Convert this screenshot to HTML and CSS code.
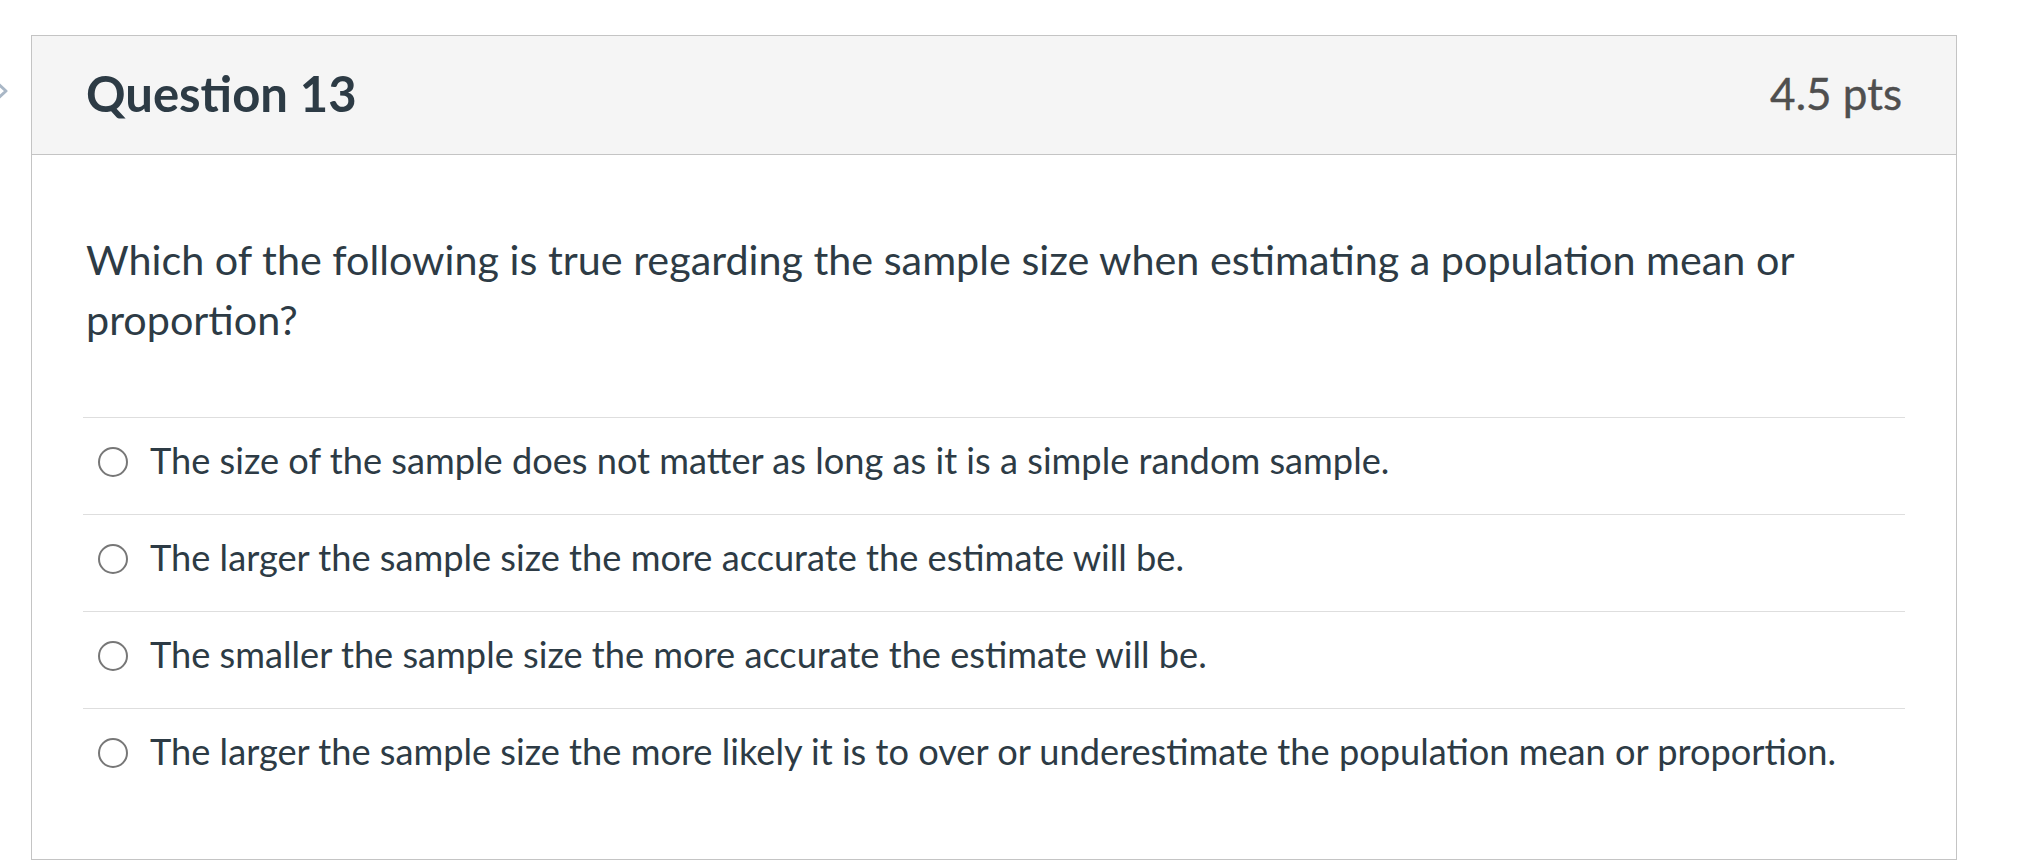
FILE: index.html
```html
<!DOCTYPE html>
<html lang="en">
<head>
<meta charset="utf-8">
<title>Question 13</title>
<link rel="stylesheet" href="styles.css">
</head>
<body>
<div class="page">
  <svg class="side-chevron" width="20" height="24" viewBox="0 0 20 24" aria-hidden="true">
    <path d="M4 3 L14 12 L4 21" fill="none" stroke="#a9b7c6" stroke-width="3" stroke-linecap="round" stroke-linejoin="round"/>
  </svg>
  <div class="question">
    <div class="question-header">
      <h2 class="question-name">Question 13</h2>
      <span class="question-points">4.5 pts</span>
    </div>
    <div class="question-body">
      <p class="question-text">Which of the following is true regarding the sample size when estimating a population mean or proportion?</p>
      <div class="answers">
        <label class="answer"><span class="radio"></span><span class="answer-text">The size of the sample does not matter as long as it is a simple random sample.</span></label>
        <label class="answer"><span class="radio"></span><span class="answer-text">The larger the sample size the more accurate the estimate will be.</span></label>
        <label class="answer"><span class="radio"></span><span class="answer-text">The smaller the sample size the more accurate the estimate will be.</span></label>
        <label class="answer"><span class="radio"></span><span class="answer-text">The larger the sample size the more likely it is to over or underestimate the population mean or proportion.</span></label>
      </div>
    </div>
  </div>
</div>
</body>
</html>
```

FILE: styles.css
```css
html, body {
  margin: 0;
  padding: 0;
  background: #ffffff;
}

body {
  font-family: Lato, "Noto Sans", "Liberation Sans", sans-serif;
  color: #2d3b45;
  font-feature-settings: "liga" 1;
}

.page {
  position: relative;
  padding: 35px 0 0 31px;
}

.side-chevron {
  position: absolute;
  left: -8px;
  top: 79px;
}

.question {
  width: 1926px;
  height: 825px;
  box-sizing: border-box;
  border: 1px solid #c4c4c4;
  background: #ffffff;
}

.question-header {
  height: 119px;
  box-sizing: border-box;
  background: #f5f5f5;
  border-bottom: 1px solid #c4c4c4;
  display: flex;
  align-items: center;
  justify-content: space-between;
  padding: 0 54px 5px 54px;
}

.question-name {
  margin: 0;
  font-size: 49px;
  font-weight: 700;
  line-height: 60px;
  color: #2d3b45;
}

.question-points {
  font-size: 44px;
  font-weight: 400;
  line-height: 60px;
  color: #4f4f4f;
  -webkit-text-stroke: 0.4px #4f4f4f;
}

.question-body {
  padding: 0 51px 0 51px;
}

.question-text {
  margin: 74px 0 68px 3px;
  font-size: 41.3px;
  line-height: 60px;
  color: #2d3b45;
}

.answers {
  display: flex;
  flex-direction: column;
}

.answer {
  display: flex;
  align-items: center;
  height: 97px;
  box-sizing: border-box;
  border-top: 1px solid #dedede;
  padding: 0 0 12px 15px;
}

.radio {
  flex: none;
  width: 30px;
  height: 30px;
  box-sizing: border-box;
  border: 2.5px solid #777777;
  border-radius: 50%;
  margin-right: 22px;
  margin-top: 4px;
}

.answer-text {
  font-size: 36.2px;
  line-height: 48px;
  color: #2d3b45;
}
```
